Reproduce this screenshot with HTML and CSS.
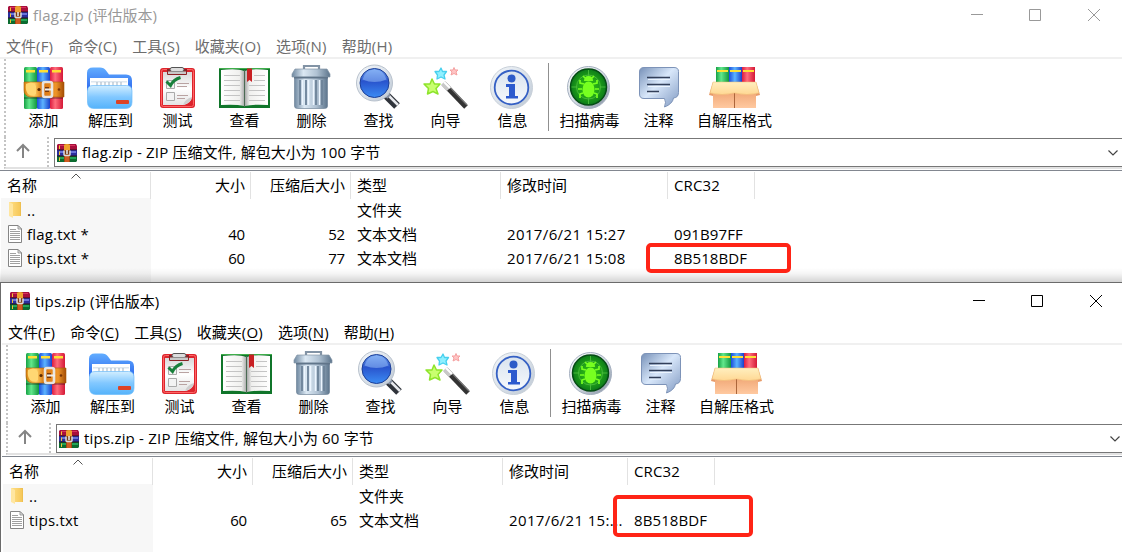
FILE: index.html
```html
<!DOCTYPE html>
<html lang="zh-CN">
<head>
<meta charset="utf-8">
<title>flag.zip</title>
<link rel="stylesheet" href="styles.css">
</head>
<body>
<svg class="defs" width="0" height="0" aria-hidden="true">
  <defs>
    <linearGradient id="gGreen"><stop offset="0" stop-color="#16a044"/><stop offset=".4" stop-color="#62e88c"/><stop offset="1" stop-color="#12963e"/></linearGradient>
    <linearGradient id="gBlue"><stop offset="0" stop-color="#1d4cdc"/><stop offset=".45" stop-color="#5cb4ff"/><stop offset="1" stop-color="#1a40cc"/></linearGradient>
    <linearGradient id="gRed"><stop offset="0" stop-color="#dc1c40"/><stop offset=".4" stop-color="#ff6d7c"/><stop offset="1" stop-color="#d41836"/></linearGradient>
    <linearGradient id="gBelt"><stop offset="0" stop-color="#d8830f"/><stop offset=".25" stop-color="#ffd468"/><stop offset=".45" stop-color="#d87410"/><stop offset=".8" stop-color="#ee9529"/><stop offset="1" stop-color="#a44c04"/></linearGradient>
    <linearGradient id="gFold" x2="0" y2="1"><stop offset="0" stop-color="#d2eeff"/><stop offset=".5" stop-color="#82c8ff"/><stop offset="1" stop-color="#55b3fb"/></linearGradient>
    <linearGradient id="gFoldBack" x2="0" y2="1"><stop offset="0" stop-color="#62adff"/><stop offset="1" stop-color="#2c68ee"/></linearGradient>
    <linearGradient id="gPaper" x2="0" y2="1"><stop offset="0" stop-color="#d8d8d8"/><stop offset=".5" stop-color="#fff"/><stop offset="1" stop-color="#e4e4e4"/></linearGradient>
    <linearGradient id="gPage"><stop offset="0" stop-color="#fff"/><stop offset=".8" stop-color="#f0f0ee"/><stop offset="1" stop-color="#b0b0b0"/></linearGradient>
    <linearGradient id="gPage2"><stop offset="0" stop-color="#aaa"/><stop offset=".2" stop-color="#f0f0ee"/><stop offset="1" stop-color="#fff"/></linearGradient>
    <linearGradient id="gSteel"><stop offset="0" stop-color="#6f88a0"/><stop offset=".3" stop-color="#dbe8f3"/><stop offset=".65" stop-color="#b0c2d3"/><stop offset="1" stop-color="#5d758c"/></linearGradient>
    <linearGradient id="gRing" x2="1" y2="1"><stop offset="0" stop-color="#fff"/><stop offset=".5" stop-color="#d6dde6"/><stop offset="1" stop-color="#7e8a9b"/></linearGradient>
    <linearGradient id="gRingSoft" x2="1" y2="1"><stop offset="0" stop-color="#f4f7fa"/><stop offset=".5" stop-color="#dbe2ea"/><stop offset="1" stop-color="#bcc7d3"/></linearGradient>
    <linearGradient id="gLens" x2="0" y2="1"><stop offset="0" stop-color="#6fa0f0"/><stop offset=".45" stop-color="#2954cd"/><stop offset="1" stop-color="#3b8cf4"/></linearGradient>
    <linearGradient id="gInfo" x2="0" y2="1"><stop offset="0" stop-color="#d9e3ee"/><stop offset="1" stop-color="#f6f9fd"/></linearGradient>
    <radialGradient id="gVirus"><stop offset="0" stop-color="#35c513"/><stop offset=".6" stop-color="#1fa018"/><stop offset="1" stop-color="#0c7a1a"/></radialGradient>
    <linearGradient id="gBubble" x2="1" y2="1"><stop offset="0" stop-color="#7791b8"/><stop offset=".45" stop-color="#d8e7fa"/><stop offset="1" stop-color="#819ac2"/></linearGradient>
    <linearGradient id="gFlap" x2="0" y2="1"><stop offset="0" stop-color="#ffefbf"/><stop offset="1" stop-color="#ffd894"/></linearGradient>
    <linearGradient id="gBox" x2="0" y2="1"><stop offset="0" stop-color="#d98a5a"/><stop offset=".5" stop-color="#f3ae7e"/><stop offset="1" stop-color="#ffc9a0"/></linearGradient>
    <linearGradient id="gYellow"><stop offset="0" stop-color="#ffdf86"/><stop offset="1" stop-color="#f6c85a"/></linearGradient>
  </defs>

  <symbol id="i-rar" viewBox="0 0 20 18">
    <path fill="#a80f3c" d="M1 0h18l1 2v4H0V1z"/><path fill="#d8325c" d="M2 1h16v1H2z"/>
    <path fill="#2b2f9e" d="M0 6h20v6H0z"/><path fill="#6a73da" d="M2 7h17v2H2z"/>
    <path fill="#0c6b30" d="M0 12h20v5l-1 1H0z"/><path fill="#22a557" d="M2 13h17v2H2z"/>
    <path fill="#2b1018" d="M0 5.500h20v.8H0zM0 11.600h20v.8H0z"/>
    <path fill="#f3c431" d="M2 1.500h1v3.500H2zM2 7.500h1V11H2zM2 13.500h1V17H2z"/>
    <path fill="#9c4a12" d="M7 0h6v18H7z"/><path fill="#efa12e" d="M7 1q3-2 6 0v5H7z"/><path fill="#cf5b22" d="M8 12h4v6H8z"/>
    <path fill="none" stroke="#d8dadf" stroke-width="1.500" d="M7 6.500v4q0 1 1 1h4q1 0 1-1v-4"/><path fill="#4a2a20" d="M8.500 7h3v3h-3z"/><path fill="#fff" d="M9.300 6h1.400v4H9.300z"/>
  </symbol>

  <symbol id="i-add" viewBox="0 0 51 46">
    <rect x="6" y="3" width="13" height="42" rx="1.500" fill="url(#gGreen)"/>
    <rect x="19" y="3" width="13" height="42" rx="1.500" fill="url(#gBlue)"/>
    <rect x="32" y="3" width="13" height="42" rx="1.500" fill="url(#gRed)"/>
    <path fill="#ffe033" d="M8 6h9v2.500H8zM21 6h9v2.500h-9zM34 6h9v2.500h-9z"/>
    <path fill="#0004" d="M6 33h39v2H6z"/>
    <path fill="url(#gBelt)" stroke="#a85a08" stroke-width=".6" d="M6 18h40v15H12q-6-1-6-7z"/>
    <path fill="#ffd773" d="M8 20q7-4 10 2v8q-4 3-8 0-3-4-2-10z"/>
    <circle cx="21" cy="25.500" r="1.600" fill="#5b2904"/>
    <rect x="25" y="18" width="9" height="15" rx="2" fill="none" stroke="#e8e4df" stroke-width="2.600"/>
    <path fill="#7a3909" d="M27 23h4v5h-4z"/><path stroke="#eee" stroke-width="2" d="M27 25.500h8"/><circle cx="41" cy="25.500" r="1.300" fill="#7a3405"/>
  </symbol>

  <symbol id="i-extract" viewBox="0 0 51 46">
    <path fill="url(#gFoldBack)" d="M2 9q0-5.500 6-5.500h7q4 0 6 3l3 4h17q6 0 6 6v10H2z"/>
    <path fill="#fff" d="M5 14h38v12H5z"/><path fill="#dde6ee" d="M6 17h36v1.500H6z"/>
    <path stroke="#a9b8c6" stroke-width="1.100" d="M12 18v5M16 18v5M20 18v5M24 18v5M28 18v5M32 18v5M36 18v5"/>
    <path fill="url(#gFold)" stroke="#6ebcf9" stroke-width=".7" d="M2.500 27q0-5.500 5.500-5.500h33.500q5.500 0 5.500 5.500v11q0 6.500-6.500 6.500H9q-6.500 0-6.500-6.500z"/>
    <rect x="31" y="36" width="13" height="4" rx="1" fill="#dd4325"/>
  </symbol>

  <symbol id="i-test" viewBox="0 0 51 46">
    <rect x="8" y="4" width="35" height="40" rx="3" fill="#dc252d"/><rect x="9.500" y="5.500" width="32" height="37" rx="2" fill="none" stroke="#f66"/>
    <path fill="url(#gPaper)" d="M11 8h29v25q-1 6-8 8H11z"/>
    <path fill="#cfcfcf" d="M31 41q2-6 9-8-1 6-9 8z"/>
    <path fill="#8b2326" d="M15 5h20v5q0 1-1 1H16q-1 0-1-1z"/><rect x="18" y="3.500" width="14" height="4" rx="2" fill="#ddd" stroke="#555"/><path fill="#c9c9c9" d="M16 7.500h18V10H16z"/>
    <path fill="#f3f3f3" stroke="#aaa" d="M14.500 16.500h8v8h-8zM14.500 28.500h8v8h-8z"/>
    <path fill="none" stroke="#18803b" stroke-width="3" d="M14.500 17.500l4 4q3-6 10-8"/>
    <path stroke="#b9a3a2" d="M25 19.500h12M25 22.500h10M25 31.500h11M25 34.500h8"/>
  </symbol>

  <symbol id="i-view" viewBox="0 0 51 46">
    <path fill="#10752a" d="M0 4h51v40H0z"/><path fill="#3fae4b" d="M0 4h51v1H0z"/>
    <path fill="url(#gPage)" d="M2 6q16-2 23 1v35q-8-2-23-1z"/><path fill="url(#gPage2)" d="M49 6q-16-2-23 1v35q8-2 23-1z"/>
    <path stroke="#c4c4c4" stroke-width="1.200" d="M5 11.500h16M5 16.500h16M5 21.500h16M5 26.500h16M5 31.500h16M5 36.500h16M30 21.500h16M30 26.500h16M30 31.500h16M30 36.500h16M35 11.500h11M35 16.500h11"/>
    <path stroke="#666" stroke-width=".7" d="M25.500 6v37"/><path fill="#c82023" d="M28 4.500h5V18l-2.500-2-2.500 2z"/>
  </symbol>

  <symbol id="i-delete" viewBox="0 0 51 46">
    <path fill="none" stroke="#8293a5" stroke-width="2.200" d="M18 6V2h15v4"/>
    <path fill="url(#gSteel)" stroke="#8496a8" stroke-width=".7" d="M9 5h32l3 5v3H6v-3z"/>
    <path fill="url(#gSteel)" stroke="#71859a" stroke-width=".7" d="M8.500 13h33v29q0 2.500-3 2.500h-27q-3 0-3-2.500z"/>
    <path stroke="#6c8298" stroke-width="1.800" d="M14 16v25M20 16v25M30 16v25M36 16v25"/><path stroke="#edf6ff" stroke-width="1.500" d="M16.500 16v25M22.500 16v25M27.500 16v25M33.500 16v25"/>
    <path fill="#60758a" d="M8 13h34v1.500H8z"/>
  </symbol>

  <symbol id="i-find" viewBox="-1 0 51 46">
    <path stroke="#30343b" stroke-width="8" d="M32 31L43 42"/><path stroke="#e7e9ed" stroke-width="2.500" d="M33 30l11 11"/><path stroke="#8590a2" stroke-width="5" d="M31 29l4 4"/>
    <circle cx="20.500" cy="19" r="18" fill="url(#gRingSoft)" stroke="#b9c2cd"/>
    <circle cx="20.500" cy="19" r="14.500" fill="url(#gLens)" stroke="#1b3e96"/>
    <path fill="#9cc3f9" opacity=".5" d="M8.500 15.500q3-10 12-10t12 10q-12 5-24 0z"/>
  </symbol>

  <symbol id="i-wizard" viewBox="-1 0 51 46">
    <path stroke="#333" stroke-width="5" d="M23 20l22 23"/><path stroke="#777" stroke-width="1.300" d="M25 19l21 22"/><path stroke="#c8c8c8" stroke-width="6" d="M22 19l6 6"/><path stroke="#fff" stroke-width="2" d="M23 18l6 6"/>
    <path fill="#c8ff6f" stroke="#8ee42c" stroke-width="1.500" stroke-linejoin="round" d="M11 15l2.500 5 5.500 0-4 4.500 2 5.500-5-2.500-5.500 2.500 1-5.500-4.500-4.500h6z"/>
    <path fill="#8ff0ff" stroke="#48d0ee" stroke-width="1.300" stroke-linejoin="round" d="M20 4l1.500 3.500h4L23 11l1 4-4-2-4 2 .500-4L14 7.500h4z"/>
    <path fill="#ffc4c4" stroke="#f5a0a0" stroke-width="1" d="M33 3.500l1 2.500h3l-2 2 1 3-3-1.500-3 1.500 1-3-2-2h3z"/>
  </symbol>

  <symbol id="i-info" viewBox="0 0 51 46">
    <circle cx="24.500" cy="23.500" r="21" fill="url(#gRingSoft)" stroke="#c8d0d9"/>
    <circle cx="24.500" cy="23.500" r="16.800" fill="url(#gInfo)" stroke="#3560c4" stroke-width="1.800"/>
    <circle cx="24.500" cy="14.500" r="4" fill="#2d5bc8"/><path fill="#2c5ace" d="M19 20h9v12h3v2.500H19V32h3v-9h-3z"/>
  </symbol>

  <symbol id="i-virus" viewBox="0 0 51 46">
    <circle cx="24.500" cy="23.500" r="21" fill="url(#gRing)" stroke="#a4afbf"/>
    <circle cx="24.500" cy="23" r="18" fill="url(#gVirus)" stroke="#064c15" stroke-width="1.500"/>
    <g fill="none" stroke="#46b83a" stroke-width="1"><circle cx="24.500" cy="23" r="12"/><path d="M24.500 6v6M24.500 34v6M7.500 23h6M35.500 23h6"/></g>
    <g fill="#77ff20"><ellipse cx="24.500" cy="25.500" rx="6" ry="8"/><path d="M20 17q0-5 4.500-5t4.500 5z"/></g>
    <path fill="none" stroke="#77ff20" stroke-width="1.700" d="M20 20l-4-1v-3M29 20l4-1v-3M18 25h-4M31 25h4M19 29l-3 1v4M30 29l3 1v4M21 14l-2-2M28 14l2-2"/>
  </symbol>

  <symbol id="i-comment" viewBox="0 0 51 46">
    <path fill="url(#gBubble)" stroke="#7d93b8" stroke-width="1" d="M11 3.500h30q4.500 0 4.500 4v21q0 5-5 5.500-1 6-9 9 2-5 0-8.500H11q-4.500 0-4.500-4.500V8q0-4.500 4.500-4.500z"/>
    <path stroke="#ecf5ff" stroke-width="1" d="M15 15.500h22M15 22.500h22M15 29h11"/><path stroke="#323f59" stroke-width="1.500" d="M14 13.500h23M14 20.500h23M14 27.500h12"/>
  </symbol>

  <symbol id="i-sfx" viewBox="0 0 51 46">
    <path fill="url(#gGreen)" d="M7 3h13v17H7z"/><path fill="url(#gBlue)" d="M20 3h13v17H20z"/><path fill="url(#gRed)" d="M33 3h13v17H33z"/>
    <path fill="#ffe033" d="M8 6h11v2H8zM21 6h11v2H21zM34 6h11v2H34z"/>
    <path fill="url(#gBox)" d="M4 18h43v26H4z"/><path stroke="#ac663b" d="M25.500 29v15"/>
    <path fill="#e79b69" d="M4 18v14l-4-1zM47 18v14l4-1z"/><path fill="url(#gFlap)" stroke="#efbd76" stroke-width=".5" d="M4 18h43l3 11q-12 3-24.500 0Q13 32 1 29z"/>
  </symbol>

  <symbol id="i-folder" viewBox="0 0 16 18">
    <path fill="#eebf50" d="M4 1h9v14H4z"/><path fill="url(#gYellow)" d="M1 1h8l3 1v13H1z"/><path fill="#ffe6a0" d="M1 1l4 2v14l-4-2z"/>
  </symbol>
  <symbol id="i-file" viewBox="0 0 16 18">
    <path fill="#fff" stroke="#858585" d="M.5.5H10L13.500 4v13.500H.5z"/><path fill="#e6e6e6" stroke="#858585" stroke-width=".8" d="M10 .5V4h3.500z"/>
    <path stroke="#a0a0a0" d="M2 4.500h6M2 6.500h10M2 8.500h10M2 10.500h10M2 12.500h10M2 14.500h10"/>
  </symbol>
  <symbol id="i-up" viewBox="0 0 16 16"><path fill="none" stroke="#858585" stroke-width="2" d="M8 15V2M2 8l6-6 6 6"/></symbol>
  <symbol id="i-down" viewBox="0 0 10 6"><path fill="none" stroke="#444" stroke-width="1.200" d="M.5.5L5 5 9.500.5"/></symbol>
  <symbol id="i-sort" viewBox="0 0 10 6"><path fill="none" stroke="#555" d="M.5 5.500L5 1l4.500 4.500"/></symbol>
  <symbol id="i-min" viewBox="0 0 12 12"><path stroke="currentColor" d="M0 5.500h12"/></symbol>
  <symbol id="i-max" viewBox="0 0 12 12"><path fill="none" stroke="currentColor" d="M.5.5h11v11H.5z"/></symbol>
  <symbol id="i-close" viewBox="0 0 12 12"><path stroke="currentColor" d="M0 0l12 12M12 0L0 12"/></symbol>
</svg>

<main class="desktop">
  <section class="window window-back">
    <header class="titlebar">
      <svg class="app-icon"><use href="#i-rar"/></svg>
      <h1 class="title"><span class="lat">flag.zip (</span>评估版本<span class="lat">)</span></h1>
      <div class="controls"><svg><use href="#i-min"/></svg><svg><use href="#i-max"/></svg><svg><use href="#i-close"/></svg></div>
    </header>
    <nav class="menu"><span>文件<i>(F)</i></span><span>命令<i>(C)</i></span><span>工具<i>(S)</i></span><span>收藏夹<i>(O)</i></span><span>选项<i>(N)</i></span><span>帮助<i>(H)</i></span></nav>
    <div class="toolbar">
      <div class="tool"><svg><use href="#i-add"/></svg>添加</div>
      <div class="tool"><svg><use href="#i-extract"/></svg>解压到</div>
      <div class="tool"><svg><use href="#i-test"/></svg>测试</div>
      <div class="tool"><svg><use href="#i-view"/></svg>查看</div>
      <div class="tool"><svg><use href="#i-delete"/></svg>删除</div>
      <div class="tool"><svg><use href="#i-find"/></svg>查找</div>
      <div class="tool"><svg><use href="#i-wizard"/></svg>向导</div>
      <div class="tool"><svg><use href="#i-info"/></svg>信息</div>
      <div class="divider"></div>
      <div class="tool tool-virus"><svg><use href="#i-virus"/></svg>扫描病毒</div>
      <div class="tool tool-comment"><svg><use href="#i-comment"/></svg>注释</div>
      <div class="tool tool-sfx"><svg><use href="#i-sfx"/></svg>自解压格式</div>
    </div>
    <div class="address-row">
      <div class="up"><svg><use href="#i-up"/></svg></div>
      <div class="address"><svg class="app-icon"><use href="#i-rar"/></svg><p class="path"><span class="lat">flag.zip - ZIP </span>压缩文件<span class="lat">, </span>解包大小为<span class="lat"> 100 </span>字节</p><svg class="chevron"><use href="#i-down"/></svg></div>
    </div>
    <div class="list">
      <div class="row head"><div>名称<svg class="sort"><use href="#i-sort"/></svg></div><div class="num">大小</div><div class="num">压缩后大小</div><div>类型</div><div>修改时间</div><div class="crc">CRC32</div></div>
      <div class="row"><div class="name"><svg><use href="#i-folder"/></svg><span class="lat">..</span></div><div></div><div></div><div>文件夹</div><div></div><div></div></div>
      <div class="row"><div class="name"><svg><use href="#i-file"/></svg><span class="lat">flag.txt *</span></div><div class="num digits">40</div><div class="num digits">52</div><div>文本文档</div><div class="date">2017/6/21 15:27</div><div class="crc">091B97FF</div></div>
      <div class="row"><div class="name"><svg><use href="#i-file"/></svg><span class="lat">tips.txt *</span></div><div class="num digits">60</div><div class="num digits">77</div><div>文本文档</div><div class="date">2017/6/21 15:08</div><div class="crc">8B518BDF</div></div>
      <div class="row filler"><div class="name"></div></div>
    </div>
    <div class="shade"></div>
    <div class="mark mark-back"></div>
  </section>

  <section class="window window-front">
    <header class="titlebar">
      <svg class="app-icon"><use href="#i-rar"/></svg>
      <h1 class="title"><span class="lat">tips.zip (</span>评估版本<span class="lat">)</span></h1>
      <div class="controls"><svg><use href="#i-min"/></svg><svg><use href="#i-max"/></svg><svg><use href="#i-close"/></svg></div>
    </header>
    <nav class="menu"><span>文件<i>(<u>F</u>)</i></span><span>命令<i>(<u>C</u>)</i></span><span>工具<i>(<u>S</u>)</i></span><span>收藏夹<i>(<u>O</u>)</i></span><span>选项<i>(<u>N</u>)</i></span><span>帮助<i>(<u>H</u>)</i></span></nav>
    <div class="toolbar">
      <div class="tool"><svg><use href="#i-add"/></svg>添加</div>
      <div class="tool"><svg><use href="#i-extract"/></svg>解压到</div>
      <div class="tool"><svg><use href="#i-test"/></svg>测试</div>
      <div class="tool"><svg><use href="#i-view"/></svg>查看</div>
      <div class="tool"><svg><use href="#i-delete"/></svg>删除</div>
      <div class="tool"><svg><use href="#i-find"/></svg>查找</div>
      <div class="tool"><svg><use href="#i-wizard"/></svg>向导</div>
      <div class="tool"><svg><use href="#i-info"/></svg>信息</div>
      <div class="divider"></div>
      <div class="tool tool-virus"><svg><use href="#i-virus"/></svg>扫描病毒</div>
      <div class="tool tool-comment"><svg><use href="#i-comment"/></svg>注释</div>
      <div class="tool tool-sfx"><svg><use href="#i-sfx"/></svg>自解压格式</div>
    </div>
    <div class="address-row">
      <div class="up"><svg><use href="#i-up"/></svg></div>
      <div class="address"><svg class="app-icon"><use href="#i-rar"/></svg><p class="path"><span class="lat">tips.zip - ZIP </span>压缩文件<span class="lat">, </span>解包大小为<span class="lat"> 60 </span>字节</p><svg class="chevron"><use href="#i-down"/></svg></div>
    </div>
    <div class="list">
      <div class="row head"><div>名称<svg class="sort"><use href="#i-sort"/></svg></div><div class="num">大小</div><div class="num">压缩后大小</div><div>类型</div><div>修改时间</div><div class="crc">CRC32</div></div>
      <div class="row"><div class="name"><svg><use href="#i-folder"/></svg><span class="lat">..</span></div><div></div><div></div><div>文件夹</div><div></div><div></div></div>
      <div class="row"><div class="name"><svg><use href="#i-file"/></svg><span class="lat">tips.txt</span></div><div class="num digits">60</div><div class="num digits">65</div><div>文本文档</div><div class="date">2017/6/21 15:...</div><div class="crc">8B518BDF</div></div>
      <div class="row filler"><div class="name"></div></div>
    </div>
    <div class="mark mark-front"></div>
  </section>
</main>
</body>
</html>
```
FILE: styles.css
```css
* { box-sizing: border-box; }
body {
  margin: 0;
  background: #fff;
  color: #000;
  font: 15px/20px "Open Sans", "Noto Sans CJK SC", sans-serif;
}
.defs { position: absolute; }
svg { display: block; flex: none; }
.desktop { height: 552px; overflow: hidden; }
.window { position: relative; width: 1122px; background: #fff; white-space: nowrap; }
.window-back { height: 282px; overflow: hidden; }
.window-front {
  width: 1124px;
  height: 270px;
  padding: 3px 0 0 1px;
  border-top: 1px solid #6b6b6b;
  border-left: 1px solid #6b6b6b;
}
.lat { letter-spacing: 0.2px; }
.menu i { font-style: normal; letter-spacing: 0.2px; }
.crc { letter-spacing: 0.1px; }
.date { letter-spacing: 0.37px; }
.digits { letter-spacing: -0.2px; }

.titlebar { display: flex; align-items: center; height: 31px; padding-left: 8px; }
.titlebar .app-icon { margin-bottom: 1px; }
.app-icon { width: 20px; height: 18px; }
.title { margin: 0 0 1px 5px; font-size: 15px; font-weight: 400; }
.controls { display: flex; gap: 46px; margin: 0 0 1px auto; padding-right: 22px; }
.controls svg { width: 12px; height: 12px; }
.controls svg:last-child { margin-left: 1px; }
.window-back .title { color: #999; }
.window-back .controls { color: #999; }
.window-back .menu { color: #6d6d6d; }

.menu { display: flex; gap: 15px; align-items: center; height: 28px; padding: 3px 0 0 6px; border-bottom: 2px solid #f0f0f0; }
.menu u { text-underline-offset: 2px; }

.toolbar { display: flex; height: 78px; padding: 5px 0 0 5px; margin-left: 4px; border-left: 2px dotted #c4c4c4; }
.tool { display: flex; flex-direction: column; align-items: center; width: 67px; line-height: 20px; }
.toolbar .tool:first-child { margin-left: -1px; }
.tool svg { width: 51px; height: 46px; }
.divider { width: 1px; height: 68px; margin: -1px 2px 0; background: #909090; }
.tool-virus { width: 77px; }
.tool-comment { width: 61px; }
.tool-sfx { width: 91px; }

.address-row { display: flex; height: 32px; margin-left: 4px; border-left: 2px dotted #c4c4c4; border-bottom: 2px solid #e2e2e2; }
.up { display: flex; justify-content: center; width: 43px; padding: 6px 8px 0 0; border-right: 2px dotted #c4c4c4; }
.up svg { width: 16px; height: 16px; }
.address { display: flex; flex: 1; align-items: center; height: 29px; margin: 1px 0 0 5px; padding: 0 4px 0 2px; border: 1px solid #777; border-right: 0; }
.path { margin: 0 0 2px 5px; }
.chevron { width: 10px; height: 6px; margin-left: auto; }

.list { border-top: 1px solid #828790; margin-top: 1px; }
.row { display: grid; grid-template-columns: 151px 100px 100px 150px 167px 87px; height: 24px; line-height: 24px; }
.row > div { padding: 0 6px; }
.row > div:first-child { padding-left: 7px; }
.row .num { text-align: right; }
.head { position: relative; height: 27px; padding-top: 1px; line-height: 27px; }
.head > div { border-right: 1px solid #e2e2e2; }
.head .num { padding-right: 5px; }
.sort { position: absolute; left: 71px; top: 2px; width: 10px; height: 6px; }
.name { display: flex; align-items: center; gap: 3px; margin-left: 1px; background: #f7f7f7; }
.row > .name:first-child { padding-left: 7px; }
.name svg { width: 16px; height: 18px; }
.filler { height: 60px; }
.window-front .row { grid-template-columns: 151px 100px 100px 150px 125px 87px; }

.shade { position: absolute; left: 0; right: 0; bottom: 0; height: 14px; background: linear-gradient(#0000, #0000000a 40%, #0000002b); }
.mark { position: absolute; border: 4px solid #ff2416; border-radius: 5px; }
.mark-back { left: 646px; top: 243px; width: 145px; height: 30px; }
.mark-front { left: 612px; top: 212px; width: 140px; height: 42px; }
```
